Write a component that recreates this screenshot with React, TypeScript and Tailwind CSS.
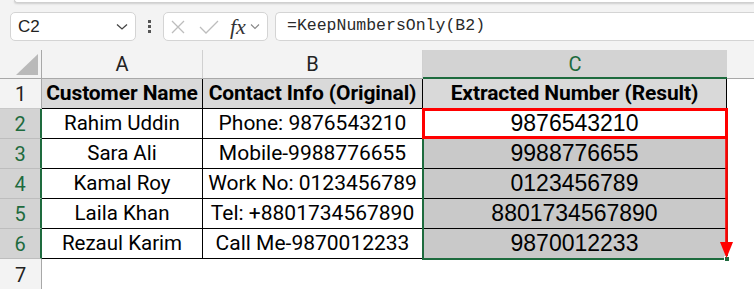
import React from "react";

const rows = [
  ["Rahim Uddin", "Phone: 9876543210", "9876543210"],
  ["Sara Ali", "Mobile-9988776655", "9988776655"],
  ["Kamal Roy", "Work No: 0123456789", "0123456789"],
  ["Laila Khan", "Tel: +8801734567890", "8801734567890"],
  ["Rezaul Karim", "Call Me-9870012233", "9870012233"],
];

const cellFont = { fontFamily: "Roboto, 'Noto Sans', sans-serif" };
const arialFont = { fontFamily: "'Liberation Sans', Arial, sans-serif" };

function Toolbar() {
  return (
    <div className="flex items-center h-[29px] mt-[9px] pl-[10px]">
      <div className="w-[126px] h-[29px] bg-white border border-[#d4d4d4] rounded-[5px] flex items-center justify-between pl-[7px] pr-[7px]">
        <span className="text-[17px] text-[#222]" style={arialFont}>C2</span>
        <svg width="12" height="8" viewBox="0 0 12 8">
          <path d="M1 1.5 L6 6 L11 1.5" fill="none" stroke="#444" strokeWidth="1.3" />
        </svg>
      </div>
      <div className="w-[27px] flex flex-col items-center gap-[2px]">
        <div className="w-[3px] h-[3px] bg-[#555]" />
        <div className="w-[3px] h-[3px] bg-[#555]" />
        <div className="w-[3px] h-[3px] bg-[#555]" />
      </div>
      <div className="w-[105px] h-[29px] bg-white border border-[#d4d4d4] rounded-[5px] flex items-center pl-[7px]">
        <svg width="14" height="14" viewBox="0 0 14 14">
          <path d="M1 1 L13 13 M13 1 L1 13" stroke="#bdbdbd" strokeWidth="1.3" />
        </svg>
        <svg width="20" height="14" viewBox="0 0 20 14" className="ml-[14px]">
          <path d="M1 7 L7 13 L19 1" fill="none" stroke="#bdbdbd" strokeWidth="1.3" />
        </svg>
        <span className="ml-[11px] text-[22px] italic text-[#333] leading-none" style={{ fontFamily: "'Liberation Serif', serif" }}>fx</span>
        <svg width="10" height="7" viewBox="0 0 10 7" className="ml-[4px]">
          <path d="M1 1.5 L5 5.5 L9 1.5" fill="none" stroke="#888" strokeWidth="1.1" />
        </svg>
      </div>
      <div className="flex-1 ml-[7px] h-[29px] bg-white border border-r-0 border-[#d4d4d4] rounded-l-[5px] flex items-center pl-[11px]">
        <span className="text-[16.5px] text-[#2a2a2a]" style={{ fontFamily: "'Liberation Mono', monospace" }}>=KeepNumbersOnly(B2)</span>
      </div>
    </div>
  );
}

export default function App() {
  return (
    <div className="w-[754px] h-[289px] bg-[#f3f3f3] overflow-hidden relative">
      <div className="ml-[14px] h-[3px] bg-white border-b border-l border-[#d0d0d0] rounded-bl-[4px] shadow-[0_1px_2px_rgba(0,0,0,0.15)]" />
      <Toolbar />
      <div className="mt-[9px] grid grid-cols-[42px_161px_220px_304px_1fr] grid-rows-[29px_30px_30px_30px_30px_30px_30px_31px] relative">
        {/* column headers */}
        <div className="bg-[#f3f3f3] border-r border-b border-[#a8a8a8] relative">
          <div className="absolute right-[3px] bottom-[3px] w-0 h-0 border-l-[22px] border-l-transparent border-b-[21px] border-b-[#b9b9b9]" />
        </div>
        <div className="bg-[#f3f3f3] border-r border-b border-[#d0d0d0] border-b-[#a8a8a8] flex items-center justify-center text-[20px] text-[#222]" style={cellFont}>A</div>
        <div className="bg-[#f3f3f3] border-r border-b border-[#d0d0d0] border-b-[#a8a8a8] flex items-center justify-center text-[20px] text-[#222]" style={cellFont}>B</div>
        <div className="bg-[#d3d3d3] border-b-2 border-[#1e6b3e] flex items-center justify-center text-[20px] text-[#1e6b3e]" style={cellFont}>C</div>
        <div className="bg-[#f3f3f3] border-b border-[#a8a8a8]" />

        {/* row 1 */}
        <div className="bg-[#f3f3f3] border-r border-b border-[#c8c8c8] border-r-[#a8a8a8] flex items-center justify-center text-[20px] text-[#222]" style={cellFont}>1</div>
        <div className="bg-[#d9d9d9] border-r border-b border-black flex items-center justify-center text-[21px] font-bold text-black whitespace-nowrap tracking-[-0.1px]" style={cellFont}>Customer Name</div>
        <div className="bg-[#d9d9d9] border-r border-b border-black flex items-center justify-center text-[21px] font-bold text-black whitespace-nowrap tracking-[-0.1px]" style={cellFont}>Contact Info (Original)</div>
        <div className="bg-[#d9d9d9] border-r border-b border-black flex items-center justify-center text-[21px] font-bold text-black whitespace-nowrap tracking-[-0.1px]" style={cellFont}>Extracted Number (Result)</div>
        <div className="bg-white" />

        {rows.map((r, i) => (
          <React.Fragment key={i}>
            <div className="bg-[#d3d3d3] border-r-2 border-b border-[#bdbdbd] border-r-[#1e6b3e] flex items-center justify-center text-[20px] text-[#1e6b3e]" style={cellFont}>{i + 2}</div>
            <div className="bg-white border-r border-b border-black flex items-center justify-center text-[20.5px] text-black whitespace-nowrap" style={cellFont}>{r[0]}</div>
            <div className="bg-white border-r border-b border-black flex items-center justify-center text-[21px] text-black whitespace-nowrap" style={cellFont}>{r[1]}</div>
            <div className={`${i === 0 ? "bg-white" : "bg-[#c9c9c9]"} border-r border-b border-black flex items-center justify-center text-[23px] text-black whitespace-nowrap`} style={arialFont}>{r[2]}</div>
            <div className="bg-white" />
          </React.Fragment>
        ))}

        {/* row 7 */}
        <div className="bg-[#f3f3f3] border-r border-[#a8a8a8] flex items-center justify-center text-[20px] text-[#222]" style={cellFont}>7</div>
        <div className="col-span-4 bg-white" />

        {/* selection border C2:C6 */}
        <div className="absolute left-[422px] top-[59px] w-[306px] h-[151px] border-2 border-[#1e6b3e] pointer-events-none" />
        <div className="absolute left-[724px] top-[206px] w-[6px] h-[6px] bg-[#1e6b3e] border border-white pointer-events-none" />

        {/* red annotation */}
        <div className="absolute left-[422px] top-[58px] w-[306px] h-[31px] border-[3px] border-[#ff0000] pointer-events-none" />
        <svg className="absolute left-[716px] top-[86px] pointer-events-none" width="20" height="126" viewBox="0 0 20 126">
          <path d="M10.5 2 L10.5 108" stroke="#ff0000" strokeWidth="2.6" />
          <path d="M4 106 L17 106 L10.5 122 Z" fill="#ff0000" />
        </svg>
      </div>
    </div>
  );
}
